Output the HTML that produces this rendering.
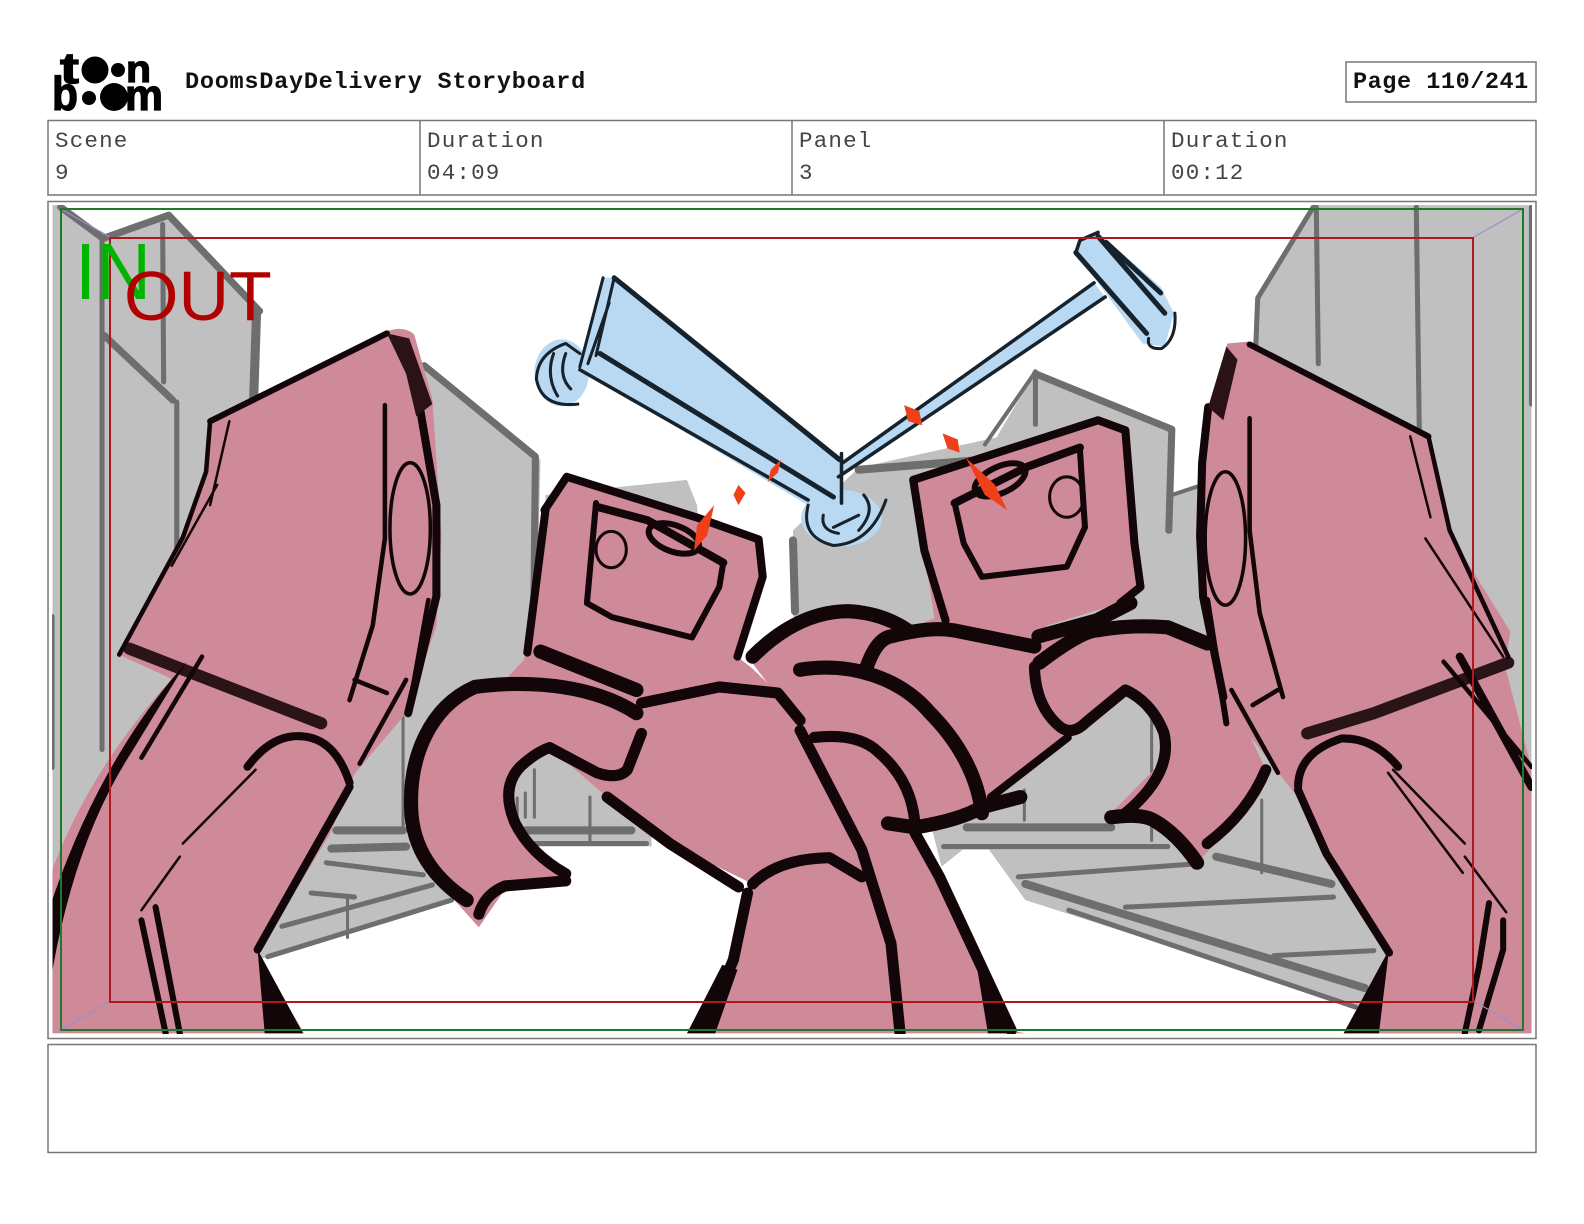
<!DOCTYPE html>
<html><head><meta charset="utf-8"><title>DoomsDayDelivery Storyboard</title>
<style>html,body{margin:0;padding:0;background:#fff;width:1584px;height:1224px;overflow:hidden}svg{display:block}
.m{font-family:"Liberation Mono",monospace;font-size:22.5px;letter-spacing:1.2px;fill:#444}
.b{font-family:"Liberation Mono",monospace;font-size:23.5px;font-weight:bold;fill:#111}
.l{font-family:"Liberation Sans",sans-serif;font-weight:bold;fill:#000;stroke:#000;stroke-width:1.2}
.bx{fill:none;stroke:#777;stroke-width:1.5}
</style></head><body>
<svg width="1584" height="1224" viewBox="0 0 1584 1224" xmlns="http://www.w3.org/2000/svg">
<rect width="1584" height="1224" fill="#fff"/>
<clipPath id="c"><rect x="52" y="205" width="1480" height="829"/></clipPath>
<!-- art, authored in 1568-wide coordinates -->
<g clip-path="url(#c)"><g transform="scale(1.0102)" stroke-linecap="round" stroke-linejoin="round">
<!-- gray buildings -->
<g fill="#c0c0c0">
<path d="M52,203H60L102,236L167,213L255,305V400L420,360L535,455L530,680L645,800V838L505,838L450,890L265,947L52,1023Z"/>
<path d="M540,490L680,475L690,500L700,640H540Z"/>
<path d="M785,525L850,463L975,452L1025,368L1160,425L1160,490L1190,480L1240,420L1243,295L1300,203H1516V1023H1350L1346,997L1015,891L979,841H953L932,858L920,810H790Z"/>
</g>
<rect x="755" y="505" width="30" height="120" fill="#fff"/>
<path d="M850,463L1000,430V470L905,480V610L800,620L785,610V535L830,540Z" fill="#c0c0c0"/>
<g fill="none" stroke="#6e6e6e">
<path stroke-width="7" d="M60,205L102,236L167,213L257,308M420,362L530,452L528,650M1160,425L1157,525M1025,370L1160,425M103,332L171,396"/>
<path stroke-width="9" d="M254,308L251,398"/>
<path stroke-width="5" d="M161,222L162,378M101,235V742M175,398V600M1300,205L1245,295L1243,345M1516,205V400M1025,368V420M1303,205L1305,360M1402,205L1405,430"/>
<path stroke-width="4" d="M52,610V760M1025,368L975,440M1160,490L1190,480"/>
<path stroke-width="8" d="M850,465L975,455M333,822H399M515,822H625M957,819H1100M1204,848L1318,875M1015,875L1351,978M328,840L402,838M785,535L787,605"/>
<path stroke-width="5" d="M279,917L428,876M265,947L447,891M525,835H640M934,838H1156M1008,868L1185,855M1114,898L1320,888M1261,946L1360,941M1058,901L1342,997M323,854L419,866M308,884L351,888"/>
<path stroke-width="3" d="M344,889V928M399,710V819M584,789V832M529,762V809M512,790V809M520,785V809M1014,782V812M1140,713V832M1249,792V864"/>
</g>
<!-- pink figures -->
<g fill="#cf8a9a">
<path d="M52,1023V860Q90,760 170,672L118,648L181,532L204,467L208,417L383,328Q400,322 410,331L428,395L437,530L432,620L402,706L351,766L327,825L255,944L301,1023Z"/>
<path d="M519,653L539,505L561,472L751,534L755,571L730,650L745,662L770,686L792,713L853,841L882,934L891,1023H687L726,950L745,875L663,835L601,789L544,740L515,759L503,799L520,839L560,872L500,880L474,918L440,880L407,819L409,743L452,686L500,673Z"/>
<path d="M740,650Q790,600 850,603L900,622L925,612L904,475L1087,416L1114,426L1129,581L1109,597L1034,620L1086,620L1156,619L1195,637L1253,762L1232,805L1185,854L1142,812L1100,805L1152,752L1152,716L1114,683L1062,723L1057,730L981,789L972,805L906,825L930,868L1001,1020L1015,1023H891L882,934L853,841L800,730Z"/>
<path d="M1215,340L1237,338L1414,432L1436,530L1495,625L1490,660L1516,760V1023H1331L1375,943L1313,845L1285,790L1215,700L1195,620L1188,530L1196,403Z"/>
</g>
<!-- hammers -->
<g fill="#b9d9f3">
<ellipse cx="556" cy="369" rx="27" ry="33"/>
<path d="M597,275H608L831,455L835,490L808,505L574,366Z"/>
<path d="M833,459L1083,280L1094,294L830,472Z"/>
<path d="M1069,238L1087,230L1149,284L1162,310L1153,343L1131,340L1065,250Z"/>
<ellipse cx="833" cy="513" rx="40" ry="28"/>
</g>
<g fill="none" stroke="#16222c">
<path stroke-width="5" d="M608,275L831,455M594,350L825,492M1065,250L1135,330M1087,234L1153,310M1095,240L1149,290"/>
<path stroke-width="3.5" d="M574,366L800,495M833,459L1083,280M830,472L1094,294M833,449V498M1069,238L1065,250M1087,230L1069,238"/>
<path stroke-width="3" d="M597,275L574,363M608,275L590,352M603,300L582,360M574,350L560,340Q532,350 531,375Q536,404 572,400M548,350Q540,372 552,392M560,350Q552,372 565,385M800,500Q792,532 825,540Q862,538 877,495M815,510Q812,525 830,528M855,490Q868,505 850,525M825,522L850,510M1137,335Q1135,346 1150,345Q1165,335 1163,310"/>
</g>
<!-- ink outlines -->
<g fill="none" stroke="#120608">
<path stroke-width="14" d="M630,706C590,680 530,672 470,680C425,700 405,750 407,800C408,840 430,870 462,891M535,645L630,683M858,660Q868,632 882,630Q920,620 944,624L1024,640M1029,656Q1070,625 1086,624Q1120,618 1156,621L1195,637M1028,630L1086,614L1119,597M1100,809Q1130,805 1142,812Q1165,825 1185,854M879,815L906,819Q950,812 972,799L1010,789M745,650Q790,605 840,605Q875,607 900,625M792,663C840,655 890,670 920,705C950,735 968,770 972,805"/>
<path stroke-width="11" d="M474,905Q480,885 500,877L560,872M560,865Q525,845 510,815Q495,780 515,759Q530,745 544,740L591,765Q612,772 621,762L635,726M635,696L712,680L770,686L792,713M792,723L821,779L853,841L882,934L891,1023M906,825L930,868L1001,1020M740,884L726,950L705,1000M601,789L663,835L731,878M745,875Q770,850 821,849L853,868M806,730Q850,725 870,745Q905,775 906,822M1024,660Q1025,700 1050,720Q1062,728 1075,715L1114,683Q1140,695 1152,725Q1162,765 1114,805M1195,835Q1235,805 1253,762"/>
<path stroke-width="12" stroke="#2a1418" d="M128,642L318,716M1294,726L1360,706L1493,656"/>
<path stroke-width="8" d="M245,759Q265,732 289,729Q330,725 346,775M346,779L255,940M540,505L522,646M561,472L539,505M561,472L689,512L751,534L755,571L730,650M904,475L1087,416L1114,426L1123,538L1129,581L1109,597M904,475L915,545L936,614M1285,782L1313,845L1375,943M981,789L1057,730M1285,779Q1285,745 1328,731Q1360,730 1384,759M592,502L641,515L716,557M945,498L1017,462L1069,443M1445,650L1516,779M415,400L432,500L432,590L404,706M1196,403L1190,458L1188,531L1191,591L1211,690"/>
<path stroke-width="6" d="M154,898L178,1023M140,911L164,1023M1474,894L1464,957L1450,1023M1488,911V940L1464,1020M383,330L208,417M1237,341L1414,432M590,498L581,597L606,611L685,631L712,581L716,557M945,498L954,538L972,571L1056,561L1074,522L1069,445M1195,594L1214,716"/>
<path stroke-width="4.5" d="M381,401V533L369,619L346,693M351,673L383,686M424,594L404,706M208,417L204,467L181,532L118,648M1237,414V525L1247,607L1270,690M1240,698L1265,683M1219,683L1265,765M1429,655L1516,759M1414,432L1435,525L1493,650M200,650L140,750M402,673L356,756"/>
<path stroke-width="2.5" d="M253,762L181,835M178,848L140,901M1379,762L1450,835M1374,765L1448,864M1450,848L1491,903M227,417L208,500M215,480L170,560M1396,432L1416,512M1411,533L1488,650"/>
<ellipse cx="406" cy="523" rx="20" ry="65" stroke-width="3.5"/>
<ellipse cx="1213" cy="533" rx="20" ry="66" stroke-width="3.5"/>
<ellipse cx="667" cy="533" rx="26" ry="13" transform="rotate(20 667 533)" stroke-width="6"/>
<ellipse cx="605" cy="544" rx="15" ry="18" stroke-width="3"/>
<ellipse cx="990" cy="475" rx="27" ry="13" transform="rotate(-25 990 475)" stroke-width="6"/>
<ellipse cx="1056" cy="492" rx="17" ry="20" stroke-width="3"/>
</g>
<!-- ink wedges -->
<g fill="#120608">
<path d="M185,655Q100,750 52,890V960Q75,830 130,745Z"/>
<path d="M255,940L300,1023H262Z"/>
<path d="M1375,940L1365,1023H1330Z"/>
<path d="M715,955L730,960L708,1023H680Z"/>
<path d="M965,945L1003,1023H978Z"/>
<path d="M383,330L405,335L428,400L412,412L402,370Z" fill="#2a1216"/>
<path d="M1214,343L1225,356L1211,416L1196,403Z" fill="#2a1216"/>
</g>
<!-- red marks -->
<g fill="#f0401a">
<path d="M707,500L700,530L687,545L690,520Z"/>
<path d="M731,480L738,488L731,500L726,490Z"/>
<path d="M773,455L770,468L760,477L763,465Z"/>
<path d="M895,401L910,407L913,421L899,417Z"/>
<path d="M933,429L948,435L950,448L938,444Z"/>
<path d="M956,453L985,480L997,505L975,490Z"/>
</g>
</g>
<!-- frame guides -->
<g fill="none">
<path stroke="#9a8fc8" stroke-width="1.2" d="M61,209L110,237M1523,209L1474,237M61,1030L110,1001M1523,1030L1474,1001"/>
<rect x="61" y="209" width="1462" height="821" stroke="#1c7a2a" stroke-width="2"/>
<rect x="110" y="238" width="1363" height="764" stroke="#b01820" stroke-width="2"/>
</g>
<text x="75" y="299" font-family="Liberation Sans, sans-serif" font-size="80" fill="#00b400" textLength="76" lengthAdjust="spacingAndGlyphs">IN</text>
<text x="124" y="320" font-family="Liberation Sans, sans-serif" font-size="70" fill="#b00000">OUT</text>
</g>
<!-- logo -->
<text class="l" x="60" y="83" font-size="44" textLength="19" lengthAdjust="spacingAndGlyphs">t</text>
<circle cx="95" cy="70" r="13.5"/><circle cx="118" cy="70" r="7"/>
<text class="l" x="126" y="82" font-size="38" textLength="25" lengthAdjust="spacingAndGlyphs">n</text>
<text class="l" x="52" y="110" font-size="47" textLength="26" lengthAdjust="spacingAndGlyphs">b</text>
<circle cx="89" cy="98" r="7"/><circle cx="114" cy="97" r="14"/>
<text class="l" x="125" y="110" font-size="44" textLength="38" lengthAdjust="spacingAndGlyphs">m</text>
<!-- header -->
<text class="b" x="185" y="88" letter-spacing="0.75">DoomsDayDelivery Storyboard</text>
<rect class="bx" x="1346" y="62" width="190" height="40"/>
<text class="b" x="1353" y="88" letter-spacing="0.55">Page 110/241</text>
<!-- info table -->
<rect class="bx" x="48" y="120.5" width="1488" height="74.5"/>
<path class="bx" d="M420,120V195M792,120V195M1164,120V195"/>
<text class="m" x="55" y="147">Scene</text><text class="m" x="55" y="179">9</text>
<text class="m" x="427" y="147">Duration</text><text class="m" x="427" y="179">04:09</text>
<text class="m" x="799" y="147">Panel</text><text class="m" x="799" y="179">3</text>
<text class="m" x="1171" y="147">Duration</text><text class="m" x="1171" y="179">00:12</text>
<!-- panel + notes -->
<rect class="bx" x="48" y="201.5" width="1488" height="837"/>
<rect class="bx" x="48" y="1044.5" width="1488" height="108"/>
</svg>
</body></html>
